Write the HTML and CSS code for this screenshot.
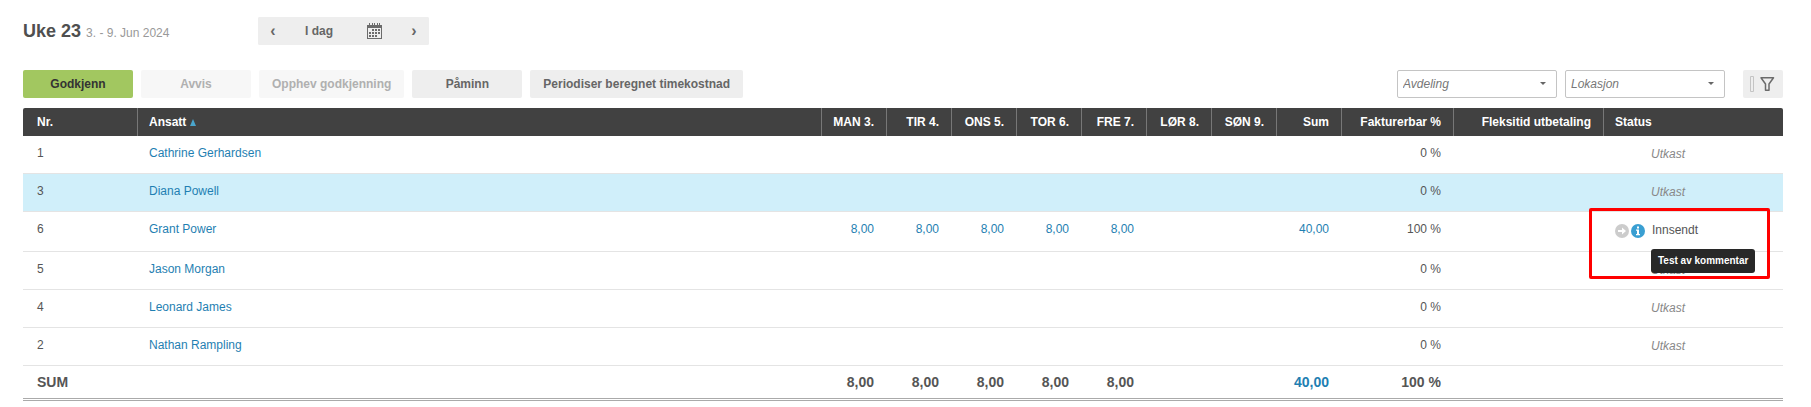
FILE: index.html
```html
<!DOCTYPE html>
<html lang="no">
<head>
<meta charset="utf-8">
<title>Uke 23</title>
<link rel="stylesheet" href="styles.css">
</head>
<body>
<main class="page">
  <header class="period">
    <h1 class="period-title">Uke 23 <span class="period-dates">3. - 9. Jun 2024</span></h1>
    <nav class="period-nav" aria-label="Periode">
      <button class="nav-btn nav-arrow" aria-label="Forrige uke">‹</button>
      <button class="nav-btn nav-today">I dag</button>
      <button class="nav-btn nav-calendar" aria-label="Kalender">
        <svg width="15" height="16" viewBox="0 0 15 16" fill="#6b6b6b" shape-rendering="crispEdges"><path fill-rule="evenodd" d="M0 2h2V0h1v2h2V0h1v2h1V0h1v2h2V0h1v2h1V0h1v2h2v14H0zM1 5h13v10H1z"/><path d="M5 6h2v2H5zM8 6h2v2H8zM11 6h2v2h-2zM2 9h2v2H2zM5 9h2v2H5zM8 9h2v2H8zM11 9h2v2h-2zM2 12h2v2H2zM5 12h2v2H5zM8 12h2v2H8z"/></svg>
      </button>
      <button class="nav-btn nav-arrow" aria-label="Neste uke">›</button>
    </nav>
  </header>

  <div class="toolbar">
    <div class="actions">
      <button class="btn btn-primary">Godkjenn</button>
      <button class="btn" disabled>Avvis</button>
      <button class="btn" disabled>Opphev godkjenning</button>
      <button class="btn">Påminn</button>
      <button class="btn">Periodiser beregnet timekostnad</button>
    </div>
    <div class="filters">
      <div class="combo"><select class="select" aria-label="Avdeling"><option>Avdeling</option></select></div>
      <div class="combo"><select class="select" aria-label="Lokasjon"><option>Lokasjon</option></select></div>
      <button class="filter-btn" aria-label="Filter">
        <svg width="26" height="18" viewBox="0 0 26 18" fill="none"><path d="M.5 1.500h3v15h-3z" stroke="#c4c4c4"/><path d="M11 2.800h12.500l-4.500 6.200v6.200h-3.500V9z" stroke="#6b6b6b" stroke-width="1.500" stroke-linejoin="round"/></svg>
      </button>
    </div>
  </div>

  <table class="grid">
    <colgroup><col class="c-nr"><col><col class="c-day" span="8"><col class="c-bill"><col class="c-flex"><col class="c-status"></colgroup>
    <thead>
      <tr><th>Nr.</th><th>Ansatt <svg class="sort" width="6" height="7" viewBox="0 0 6 7" fill="#4aa5cc"><path d="M3 0l3 7H0z"/></svg></th><th class="num">MAN 3.</th><th class="num">TIR 4.</th><th class="num">ONS 5.</th><th class="num">TOR 6.</th><th class="num">FRE 7.</th><th class="num">LØR 8.</th><th class="num">SØN 9.</th><th class="num">Sum</th><th class="num">Fakturerbar %</th><th class="num">Fleksitid utbetaling</th><th>Status</th></tr>
    </thead>
    <tbody>
      <tr><td>1</td><td><a href="#">Cathrine Gerhardsen</a></td><td></td><td></td><td></td><td></td><td></td><td></td><td></td><td></td><td class="num">0 %</td><td></td><td class="status draft">Utkast</td></tr>
      <tr class="selected"><td>3</td><td><a href="#">Diana Powell</a></td><td></td><td></td><td></td><td></td><td></td><td></td><td></td><td></td><td class="num">0 %</td><td></td><td class="status draft">Utkast</td></tr>
      <tr class="submitted"><td>6</td><td><a href="#">Grant Power</a></td><td class="num"><a href="#">8,00</a></td><td class="num"><a href="#">8,00</a></td><td class="num"><a href="#">8,00</a></td><td class="num"><a href="#">8,00</a></td><td class="num"><a href="#">8,00</a></td><td></td><td></td><td class="num"><a href="#">40,00</a></td><td class="num">100 %</td><td></td>
        <td class="status sent">
          <span class="status-icons">
            <svg width="14" height="14" viewBox="0 0 14 14"><circle cx="7" cy="7" r="7" fill="#ccc"/><path d="M3 6h4V3.500L11 7l-4 3.500V8H3z" fill="#fff"/></svg>
            <svg width="14" height="14" viewBox="0 0 14 14"><circle cx="7" cy="7" r="7" fill="#3a9fd2"/><path d="M6 2.500h2v2H6zM5 5.500h3V10h1v1.200H5V10h1V6.700H5z" fill="#fff"/></svg>
          </span>Innsendt
          <div class="marker"></div>
          <div class="tooltip" role="tooltip">Test av kommentar</div>
        </td></tr>
      <tr><td>5</td><td><a href="#">Jason Morgan</a></td><td></td><td></td><td></td><td></td><td></td><td></td><td></td><td></td><td class="num">0 %</td><td></td><td class="status draft">Utkast</td></tr>
      <tr><td>4</td><td><a href="#">Leonard James</a></td><td></td><td></td><td></td><td></td><td></td><td></td><td></td><td></td><td class="num">0 %</td><td></td><td class="status draft">Utkast</td></tr>
      <tr><td>2</td><td><a href="#">Nathan Rampling</a></td><td></td><td></td><td></td><td></td><td></td><td></td><td></td><td></td><td class="num">0 %</td><td></td><td class="status draft">Utkast</td></tr>
    </tbody>
    <tfoot>
      <tr><td>SUM</td><td></td><td class="num">8,00</td><td class="num">8,00</td><td class="num">8,00</td><td class="num">8,00</td><td class="num">8,00</td><td></td><td></td><td class="num"><a href="#">40,00</a></td><td class="num">100 %</td><td></td><td></td></tr>
    </tfoot>
  </table>
</main>
</body>
</html>
```
FILE: styles.css
```css
* { box-sizing: border-box; }

body {
  margin: 0;
  background: #fff;
  color: #555;
  font: 12px/16px "Liberation Sans", Arial, sans-serif;
}

button, select { font: inherit; color: inherit; }
button { border: 0; border-radius: 2px; background: #eee; }
a { color: #1f7fb2; text-decoration: none; }

.page { padding: 17px 28px 0 23px; }

/* Period header */
.period { display: flex; height: 28px; }
.period-title {
  flex: 0 0 235px;
  margin: 0;
  font-size: 18px;
  line-height: 28px;
  color: #4f4f4f;
}
.period-dates { font-size: 12px; font-weight: normal; color: #999; }
.period-nav {
  display: flex;
  width: 171px;
  border-radius: 2px;
  background: #eee;
}
.nav-btn {
  display: flex;
  align-items: center;
  justify-content: center;
  padding: 0;
  font-weight: bold;
  color: #666;
}
.nav-arrow { width: 30px; font-size: 16px; }
.nav-today { width: 62px; }
.nav-calendar { width: 49px; }

/* Toolbar */
.toolbar { display: flex; justify-content: space-between; margin: 25px 0 10px; }
.actions, .filters { display: flex; gap: 8px; }
.btn {
  min-width: 110px;
  height: 28px;
  padding: 0 13px;
  font-weight: bold;
  color: #666;
}
.btn:disabled { background: #f7f7f7; color: #b0b0b0; }
.btn-primary { background: #a2c760; color: #333; }

.combo { position: relative; }
.combo::after {
  content: "";
  position: absolute;
  right: 11px;
  top: 12px;
  border: solid transparent;
  border-width: 3px 3px 0;
  border-top-color: #666;
  pointer-events: none;
}
.select {
  appearance: none;
  width: 160px;
  height: 28px;
  padding: 0 5px;
  border: 1px solid #c4c4c4;
  border-radius: 2px;
  background: #fff;
  font-style: italic;
  color: #777;
}
.filter-btn {
  display: flex;
  align-items: center;
  justify-content: center;
  width: 40px;
  height: 28px;
  margin-left: 10px;
  padding: 0;
}

/* Timesheet table */
.grid {
  width: 100%;
  table-layout: fixed;
  border-collapse: separate;
  border-spacing: 0;
}
.c-nr { width: 114px; }
.c-day { width: 65px; }
.c-bill { width: 112px; }
.c-flex { width: 150px; }
.c-status { width: 180px; }

th {
  height: 28px;
  padding: 0 12px 0 11px;
  border-left: 1px solid #777;
  background: #414141;
  color: #fff;
  text-align: left;
  white-space: nowrap;
}
th:first-child { padding-left: 14px; border-left: 0; border-top-left-radius: 2px; }
th:last-child { border-top-right-radius: 2px; }
.sort { vertical-align: baseline; }

td {
  height: 38px;
  padding: 9px 12px 0;
  border-bottom: 1px solid #e4e4e4;
  vertical-align: top;
}
td:first-child { padding-left: 14px; }
.num { text-align: right; }
.selected td { background: #d0effa; }
.submitted td { height: 40px; }

.status { position: relative; padding-top: 10px; padding-left: 48px; }
.draft { font-style: italic; color: #888; }
.sent { padding-left: 12px; }
.status-icons {
  display: inline-flex;
  gap: 2px;
  margin-right: 7px;
  vertical-align: middle;
}
.tooltip {
  position: absolute;
  left: 48px;
  top: 37px;
  z-index: 2;
  padding: 4px 7px;
  border-radius: 3px;
  background: #282828;
  color: #fff;
  font-size: 10px;
  font-weight: bold;
  white-space: nowrap;
}
.marker {
  position: absolute;
  left: -14px;
  top: -4px;
  z-index: 1;
  width: 181px;
  height: 71px;
  border: 3px solid #f00;
  border-radius: 2px;
}

tfoot td {
  height: 35px;
  padding-top: 8px;
  border-bottom: 3px double #aaa;
  font-size: 14px;
  font-weight: bold;
}
```
